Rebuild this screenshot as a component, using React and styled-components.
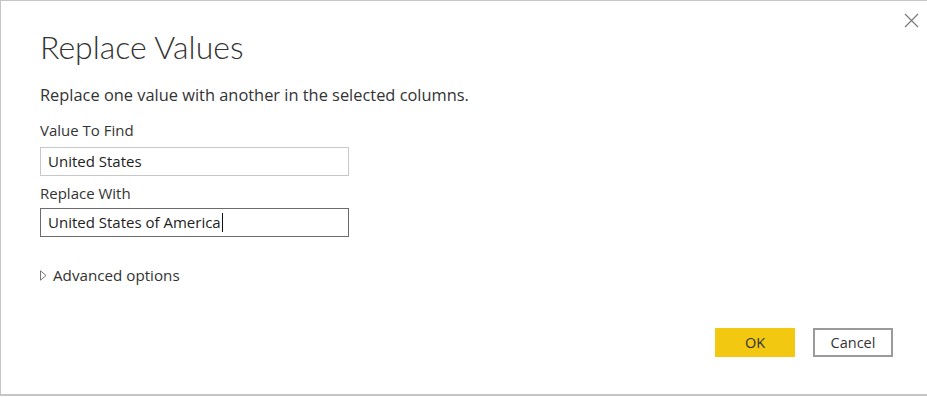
import styled, { createGlobalStyle } from "styled-components";

const GlobalStyle = createGlobalStyle`
  html, body {
    margin: 0;
    padding: 0;
    background: #ffffff;
    overflow: hidden;
  }
  body {
    font-family: "Open Sans", "Noto Sans", Arial, sans-serif;
    color: #333;
  }
`;

const Dialog = styled.div`
  position: relative;
  box-sizing: border-box;
  width: 960px;
  height: 396px;
  background: #fff;
  border-top: 1px solid #c6c6c6;
  border-left: 1px solid #c6c6c6;
  border-bottom: 2px solid #c6c6c6;
  padding: 24px 0 0 39px;
  display: flex;
  flex-direction: column;
`;

const CloseButton = styled.button`
  position: absolute;
  top: 9px;
  left: 900px;
  width: 20px;
  height: 20px;
  padding: 0;
  border: none;
  background: none;
  display: flex;
  align-items: center;
  justify-content: center;
`;

const Title = styled.h1`
  margin: 0;
  font-family: "Lato", "Open Sans", sans-serif;
  font-weight: 300;
  font-size: 32px;
  line-height: 44px;
  color: #333;
`;

const Subtitle = styled.p`
  margin: 15px 0 0;
  font-size: 16.4px;
  line-height: 22px;
  color: #333;
`;

const Field = styled.div`
  display: flex;
  flex-direction: column;
`;

const Label = styled.label`
  margin-top: ${(p) => p.$top}px;
  font-size: 15px;
  line-height: 20px;
  color: #333;
`;

const Input = styled.div`
  box-sizing: border-box;
  width: 309px;
  height: 29px;
  margin-top: ${(p) => p.$top}px;
  padding: 0 7px;
  border: 1px solid ${(p) => (p.$focused ? "#6b6b6b" : "#c8c8c8")};
  font-size: 15px;
  line-height: 27px;
  color: #222;
  display: flex;
  align-items: center;
`;

const Caret = styled.span`
  display: inline-block;
  width: 1px;
  height: 19px;
  background: #111;
  margin-left: 1px;
`;

const Advanced = styled.div`
  margin-top: 27px;
  display: flex;
  align-items: center;
  gap: 6px;
  font-size: 15.2px;
  line-height: 22px;
  color: #333;
`;

const Footer = styled.div`
  display: flex;
  gap: 18px;
  margin: 42px 0 0 675px;
`;

const Button = styled.button`
  box-sizing: border-box;
  width: 80px;
  height: 29px;
  font-family: "Open Sans", sans-serif;
  font-size: 14.5px;
  color: #333;
  background: ${(p) => (p.$primary ? "#f2c811" : "#fff")};
  border: ${(p) => (p.$primary ? "none" : "2px solid #9a9a9a")};
  padding: 0;
`;

export default function App() {
  return (
    <>
      <GlobalStyle />
      <Dialog>
        <CloseButton aria-label="Close">
          <svg width="15" height="15" viewBox="0 0 15 15">
            <path d="M1 1 L14 14 M14 1 L1 14" stroke="#7a7a7a" strokeWidth="1.2" />
          </svg>
        </CloseButton>
        <Title>Replace Values</Title>
        <Subtitle>Replace one value with another in the selected columns.</Subtitle>
        <Field>
          <Label $top={14}>Value To Find</Label>
          <Input $top={7}>United States</Input>
        </Field>
        <Field>
          <Label $top={7}>Replace With</Label>
          <Input $top={5} $focused>
            United States of America
            <Caret />
          </Input>
        </Field>
        <Advanced>
          <svg width="7" height="11" viewBox="0 0 7 11">
            <path d="M0.5 0.8 L6 5.5 L0.5 10.2 Z" fill="none" stroke="#777" strokeWidth="1" />
          </svg>
          Advanced options
        </Advanced>
        <Footer>
          <Button $primary>OK</Button>
          <Button>Cancel</Button>
        </Footer>
      </Dialog>
    </>
  );
}
